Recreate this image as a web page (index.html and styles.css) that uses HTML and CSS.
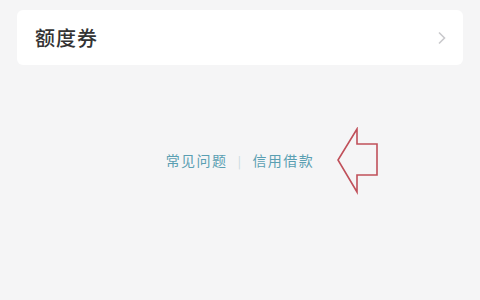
FILE: index.html
```html
<!DOCTYPE html>
<html lang="zh-CN">
<head>
  <meta charset="UTF-8">
  <meta name="viewport" content="width=device-width, initial-scale=1.0">
  <title>额度券</title>
  <link rel="stylesheet" href="styles.css">
</head>
<body>
  <main class="page">
    <!-- Coupon row -->
    <a class="card" href="#">
      <span class="card-title">额度券</span>
      <svg class="chevron" width="10" height="14" viewBox="0 0 10 14">
        <path d="M2 1.5 L7.5 7 L2 12.5" fill="none" stroke="#c9c9cc" stroke-width="1.6"/>
      </svg>
    </a>

    <!-- Footer links -->
    <nav class="links">
      <a href="#">常见问题</a>
      <span class="sep">|</span>
      <a href="#">信用借款</a>

      <!-- Red annotation arrow -->
      <svg class="mark" width="44" height="68" viewBox="0 0 44 68">
        <path d="M21 2 L2 33 L21 65 L21 48 L41 48 L41 17 L21 17 Z" fill="none" stroke="#c0505a" stroke-width="1.6" stroke-linejoin="miter"/>
      </svg>
    </nav>
  </main>
</body>
</html>
```

FILE: styles.css
```css
/* Light grey app background */
body {
  margin: 0;
  background-color: #f5f5f6;
  font-family: "Noto Sans CJK SC", "Noto Sans", sans-serif;
  height: 100vh;
}

.page {
  padding: 10px 17px 0;
}

/* White card row */
.card {
  display: flex;
  align-items: center;
  justify-content: space-between;
  height: 55px;
  padding: 0 16px 0 18px;
  background-color: #ffffff;
  border-radius: 6px;
  text-decoration: none;
}

.card-title {
  font-size: 20px;
  font-weight: 500;
  color: #333333;
  letter-spacing: 1px;
}

.chevron {
  margin-top: 1px;
}

/* Help links under the card */
.links {
  position: relative;
  display: flex;
  justify-content: center;
  align-items: center;
  gap: 10px;
  margin-top: 85px;
  font-size: 14px;
  letter-spacing: 1.5px;
}

.links a {
  color: #5a9fb2;
  text-decoration: none;
}

.sep {
  color: #c8d8dc;
  font-size: 12px;
}

.mark {
  position: absolute;
  left: 319px;
  top: -23px;
}
```
